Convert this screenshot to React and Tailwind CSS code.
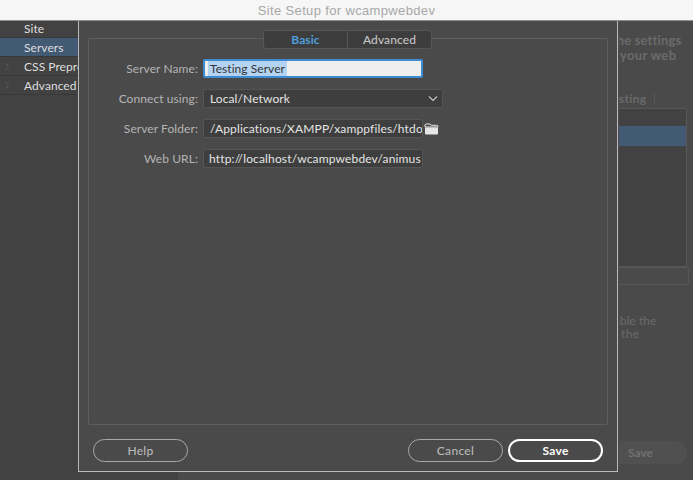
import React from "react";

const font = { fontFamily: '"Lato", "Liberation Sans", sans-serif' };

function SideRow({ label, active, chevron, h = "h-[19px] pt-[2px]" }) {
  return (
    <div className={`flex ${h} items-center border-b border-[#383838] pl-[24px] relative text-[12px] leading-none tracking-[0.05px] text-[#dedede] whitespace-nowrap ${active ? "bg-[#435a75]" : ""}`}>
      {chevron && (
        <svg className="absolute left-[4px] top-[5px]" width="6" height="9" viewBox="0 0 6 9" fill="none" stroke="#5c5c5c" strokeWidth="1">
          <path d="M1.5 1l3 3.5-3 3.5" />
        </svg>
      )}
      {label}
    </div>
  );
}

function Field({ label, children, mt }) {
  return (
    <div className={`flex items-center ${mt}`}>
      <div className="w-[109px] pr-[5px] text-right text-[12px] leading-none tracking-[0.08px] text-[#b4b4b4] whitespace-nowrap">{label}</div>
      {children}
    </div>
  );
}

function Pill({ children, className, w = "w-[95px]" }) {
  return (
    <div className={`flex h-[23px] ${w} items-center justify-center rounded-full text-[12px] leading-none ${className}`}>{children}</div>
  );
}

export default function App() {
  return (
    <div style={font} className="relative flex h-[480px] w-[693px] flex-col overflow-hidden bg-[#4a4a4a]">
      <div className="flex h-[21px] shrink-0 items-center justify-center border-b border-[#8f8f8f] bg-[#f6f6f6] font-['Liberation_Sans'] text-[13px] leading-none tracking-[0.35px] text-[#a8a8a8]">
        Site Setup for wcampwebdev
      </div>

      <div className="flex min-h-0 flex-1">
        <div className="w-[178px] shrink-0 bg-[#424242]">
          <SideRow label="Site" h="h-[17px]" />
          <SideRow label="Servers" active />
          <SideRow label="CSS Preprocessors" chevron />
          <SideRow label="Advanced Settings" chevron />
        </div>

        <div className="flex min-w-0 flex-1 justify-end overflow-hidden">
          <div className="flex w-[74px] shrink-0 flex-col overflow-hidden text-[13px] font-bold leading-[15px] text-[#6a6a6a]">
            <div className="ml-[-10px] mt-[12px] whitespace-nowrap tracking-[0.15px]">The settings</div>
            <div className="ml-[1px] whitespace-nowrap tracking-[0.35px]">your web</div>
            <div className="ml-[-13px] mt-[28px] flex h-[14px] items-center whitespace-nowrap text-[12px] tracking-[0.35px]">
              Testing
              <span className="ml-[7px] h-[12px] w-px bg-[#555555]" />
            </div>
            <div className="ml-[-20px] mt-[3px] flex h-[159px] w-[88px] shrink-0 flex-col rounded-[2px] border border-[#565656] bg-[#424242]">
              <div className="mt-[17px] h-[20px] bg-[#435a75]" />
            </div>
            <div className="ml-[-20px] h-[18px] w-[90px] shrink-0 rounded-[2px] border border-[#565656]" />
            <div className="ml-[-18px] mt-[29px] whitespace-nowrap text-[12px] font-normal leading-[13px]">enable the</div>
            <div className="ml-[2px] whitespace-nowrap text-[12px] font-normal leading-[13px] tracking-[0.35px]">the</div>
            <div className="ml-[-25px] mt-[101px] flex h-[23px] w-[93px] shrink-0 items-center justify-center rounded-full bg-[#505050] text-[12px] leading-none text-[#707070]">
              Save
            </div>
          </div>
        </div>
      </div>

      {/* Modal sheet */}
      <div className="absolute left-[78px] top-[21px] flex h-[451px] w-[540px] flex-col border-x border-b border-[#b9b9b9] bg-[#4a4a4a] px-[9px]">
        <div className="mt-[17px] h-[387px] shrink-0 rounded-[2px] border border-[#5e5e5e] pl-[5px]">
          <div className="mt-[20px]">
            <Field label="Server Name:">
              <div className="flex h-[19px] w-[220px] items-center rounded-[2px] border-2 border-[#3f8bd2] bg-[#efefef] pl-[3px] text-[12px] leading-none tracking-[0.05px] text-[#333333]">
                <span className="flex h-[15px] items-center bg-[#b4d3f2] px-[2px]">Testing Server</span>
              </div>
            </Field>
            <Field label="Connect using:" mt="mt-[11px]">
              <div className="flex h-[19px] w-[240px] items-center justify-between rounded-[2px] border border-[#555555] bg-[#3e3e3e] pl-[6px] pr-[4px] text-[12px] leading-none tracking-[0.1px] text-[#e4e4e4]">
                Local/Network
                <svg width="10" height="7" viewBox="0 0 10 7" fill="none" stroke="#c8c8c8" strokeWidth="1.1">
                  <path d="M1 1.5l4 4 4-4" />
                </svg>
              </div>
            </Field>
            <Field label="Server Folder:" mt="mt-[11px]">
              <div className="flex h-[19px] w-[220px] items-center overflow-hidden whitespace-nowrap rounded-[2px] border border-[#555555] bg-[#3e3e3e] pl-[6px] text-[12px] leading-none tracking-[0.15px] text-[#e4e4e4]">
                /Applications/XAMPP/xamppfiles/htdocs/
              </div>
              <svg className="ml-[1px]" width="15" height="12" viewBox="0 0 15 12">
                <path d="M1 2.2Q1 1 2.2 1H6l1.2 1.3h5.6Q14 2.3 14 3.5V4H1z" fill="none" stroke="#e6e6e6" strokeWidth="1" />
                <path d="M1 4.5h13v6Q14 11.5 13 11.5H2Q1 11.5 1 10.5z" fill="#e6e6e6" />
              </svg>
            </Field>
            <Field label="Web URL:" mt="mt-[11px]">
              <div className="flex h-[19px] w-[220px] items-center overflow-hidden whitespace-nowrap rounded-[2px] border border-[#555555] bg-[#3e3e3e] pl-[5px] text-[12px] leading-none tracking-[0.15px] text-[#e4e4e4]">
                http://localhost/wcampwebdev/animus
              </div>
            </Field>
          </div>
        </div>

        <div className="mt-[14px] flex items-center px-[5px]">
          <Pill className="border border-[#a9a9a9] font-medium tracking-[0.3px] text-[#b8b8b8]">Help</Pill>
          <div className="ml-auto flex gap-[5px]">
            <Pill className="border border-[#a9a9a9] font-medium tracking-[0.3px] text-[#b8b8b8]">Cancel</Pill>
            <Pill className="border-2 border-white font-bold tracking-[0.3px] text-white">Save</Pill>
          </div>
        </div>
      </div>

      {/* Tabs straddling the group box */}
      <div className="absolute left-[263px] top-[30px] flex h-[19px] text-[12px] font-medium leading-none tracking-[0.1px]">
        <div className="flex w-[85px] items-center justify-center rounded-l-[3px] border border-[#565656] bg-[#3d3d3d] font-bold text-[#4d9ddf]">Basic</div>
        <div className="flex w-[84px] items-center justify-center rounded-r-[3px] border border-l-0 border-[#565656] bg-[#3d3d3d] text-[#c4c4c4]">Advanced</div>
      </div>
    </div>
  );
}
